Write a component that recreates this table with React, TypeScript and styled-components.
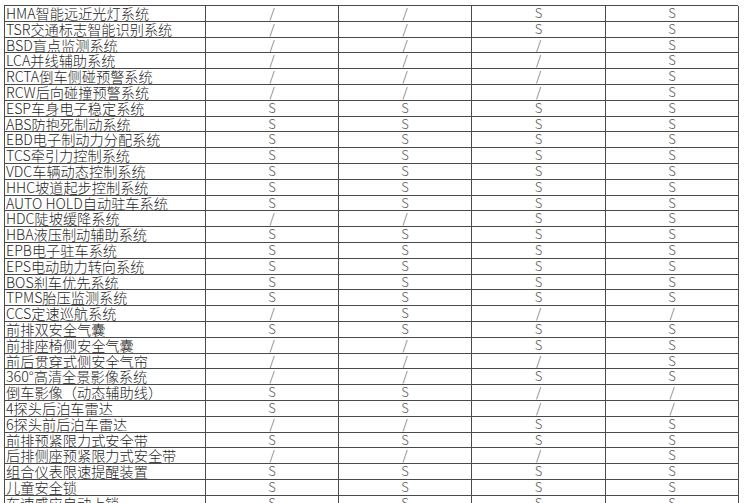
import styled, { createGlobalStyle } from 'styled-components'

const GlobalStyle = createGlobalStyle`
  body {
    margin: 0;
    background: #fff;
    font-family: "Noto Sans CJK SC", "Liberation Sans", sans-serif;
  }
`

const Page = styled.div`
  padding: 5px 0 0 4px;
  height: 503px;
  overflow: hidden;
  box-sizing: border-box;
`

const Table = styled.div`
  display: grid;
  grid-template-columns: 201px 133px 133px 134px 133px;
  grid-auto-rows: 15.8px;
  width: 734px;
  border-top: 1px solid #4a4a4a;
  border-left: 1px solid #4a4a4a;
  box-sizing: border-box;
`

const Cell = styled.div<{ $name?: boolean }>`
  border-right: 1px solid #4a4a4a;
  border-bottom: 1px solid #4a4a4a;
  box-sizing: border-box;
  font-size: ${(p) => (p.$name ? '14.2px' : '13px')};
  line-height: 14px;
  color: ${(p) => (p.$name ? '#262626' : '#555')};
  text-align: ${(p) => (p.$name ? 'left' : 'center')};
  padding-left: ${(p) => (p.$name ? '1px' : '0')};
  white-space: nowrap;
  font-weight: 300;
`

const rows: [string, string, string, string, string][] = [
  ['HMA智能远近光灯系统', '/', '/', 'S', 'S'],
  ['TSR交通标志智能识别系统', '/', '/', 'S', 'S'],
  ['BSD盲点监测系统', '/', '/', '/', 'S'],
  ['LCA并线辅助系统', '/', '/', '/', 'S'],
  ['RCTA倒车侧碰预警系统', '/', '/', '/', 'S'],
  ['RCW后向碰撞预警系统', '/', '/', '/', 'S'],
  ['ESP车身电子稳定系统', 'S', 'S', 'S', 'S'],
  ['ABS防抱死制动系统', 'S', 'S', 'S', 'S'],
  ['EBD电子制动力分配系统', 'S', 'S', 'S', 'S'],
  ['TCS牵引力控制系统', 'S', 'S', 'S', 'S'],
  ['VDC车辆动态控制系统', 'S', 'S', 'S', 'S'],
  ['HHC坡道起步控制系统', 'S', 'S', 'S', 'S'],
  ['AUTO HOLD自动驻车系统', 'S', 'S', 'S', 'S'],
  ['HDC陡坡缓降系统', '/', '/', 'S', 'S'],
  ['HBA液压制动辅助系统', 'S', 'S', 'S', 'S'],
  ['EPB电子驻车系统', 'S', 'S', 'S', 'S'],
  ['EPS电动助力转向系统', 'S', 'S', 'S', 'S'],
  ['BOS刹车优先系统', 'S', 'S', 'S', 'S'],
  ['TPMS胎压监测系统', 'S', 'S', 'S', 'S'],
  ['CCS定速巡航系统', '/', 'S', '/', '/'],
  ['前排双安全气囊', 'S', 'S', 'S', 'S'],
  ['前排座椅侧安全气囊', '/', '/', 'S', 'S'],
  ['前后贯穿式侧安全气帘', '/', '/', '/', 'S'],
  ['360°高清全景影像系统', '/', '/', 'S', 'S'],
  ['倒车影像（动态辅助线）', 'S', 'S', '/', '/'],
  ['4探头后泊车雷达', 'S', 'S', '/', '/'],
  ['6探头前后泊车雷达', '/', '/', 'S', 'S'],
  ['前排预紧限力式安全带', 'S', 'S', 'S', 'S'],
  ['后排侧座预紧限力式安全带', '/', '/', '/', 'S'],
  ['组合仪表限速提醒装置', 'S', 'S', 'S', 'S'],
  ['儿童安全锁', 'S', 'S', 'S', 'S'],
  ['车速感应自动上锁', 'S', 'S', 'S', 'S'],
]

export default function App() {
  return (
    <>
      <GlobalStyle />
      <Page>
        <Table>
          {rows.map((r, i) =>
            r.map((v, j) => (
              <Cell key={`${i}-${j}`} $name={j === 0}>
                {v}
              </Cell>
            ))
          )}
        </Table>
      </Page>
    </>
  )
}
